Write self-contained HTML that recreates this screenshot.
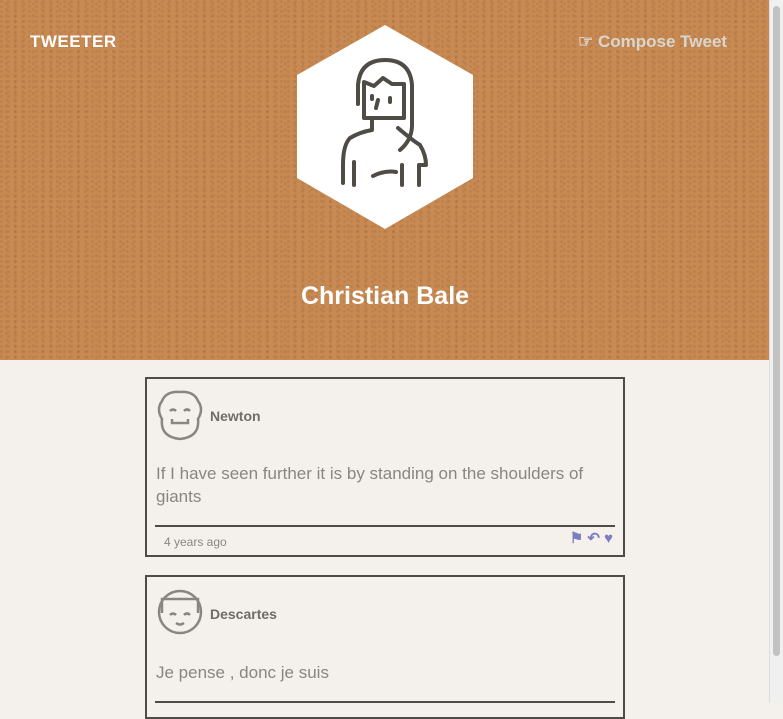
<!DOCTYPE html>
<html><head><style>
body{margin:0;width:783px;height:703px;overflow:hidden;background:#f4f1ec;font-family:"Liberation Sans",sans-serif;position:relative}
.hdr{position:absolute;left:0;top:0;width:770px;height:360px;background:#c88a52;
background-image:radial-gradient(circle at 20% 30%,rgba(90,60,30,.12) 0 1px,transparent 2px),radial-gradient(circle at 70% 60%,rgba(90,60,30,.12) 0 1px,transparent 2px);background-size:7px 5px,9px 6px}
.logo{position:absolute;left:30px;top:32px;color:#fff;font-weight:900;font-size:17px;letter-spacing:.5px}
.comp{position:absolute;left:578px;top:32px;color:#d9d6d2;font-weight:bold;font-size:17px}
.name{position:absolute;left:0;width:770px;text-align:center;top:282px;color:#fff;font-weight:bold;font-size:25px}
.sb{position:absolute;right:0;top:0;width:13px;height:703px;background:#f0f0f0;border-left:1px solid #ddd}
.sb div{position:absolute;left:3px;top:6px;width:7px;height:650px;background:#c2c2c2;border-radius:4px}
.card{position:absolute;left:145px;width:476px;border:2px solid #4f4b45;background:#f4f1ec}
.un{position:absolute;left:63px;top:29px;font-weight:bold;font-size:14px;color:#716c66}
.tx{position:absolute;left:9px;font-size:17px;color:#8a8580;line-height:23px;width:450px}
.ln{position:absolute;left:8px;right:8px;height:2px;background:#4f4b45}
.tm{position:absolute;left:17px;font-size:12px;color:#8a8580}
</style></head><body>
<div class="hdr"></div>
<div class="logo">TWEETER</div>
<div class="comp">☞ Compose Tweet</div>
<svg style="position:absolute;left:0;top:0" width="770" height="360">
<polygon points="385,25 473,75 473,178 385,229 297,178 297,75" fill="#fff"/>
<g fill="none" stroke="#4f4b45" stroke-width="4" stroke-linecap="round" stroke-linejoin="round">
<path d="M358,104 V85 Q360,60 385,60 Q410,60 412,85 V125 Q412,140 400,150"/>
<path d="M364,82 L374,86 L383,78 L392,84 L404,84 V118 H364 Z"/>
<path d="M372,118 V130 Q360,132 350,138 Q343,145 343,165 V183"/>
<path d="M398,128 Q412,140 420,145 Q426,155 426,165 H419 V185"/>
<path d="M354,162 V185"/><path d="M402,165 V185"/>
<path d="M373,176 Q385,170 396,172"/>
<path d="M378,100 L376,108"/><path d="M390,98 V102"/><path d="M372,96 V99"/>
</g></svg>
<div class="name">Christian Bale</div>
<div class="card" style="top:377px;height:176px">
<svg style="position:absolute;left:9px;top:10px" width="48" height="55"><g fill="none" stroke="#8a8580" stroke-width="2.5"><path d="M6,30 Q0,20 6,12 Q10,2 24,3 Q38,2 42,12 Q48,20 42,30 Q44,48 24,50 Q4,48 6,30Z"/><path d="M14,22 Q17,19 20,22 M28,22 Q31,19 34,22 M16,30 V34 H32 V30"/></g></svg>
<div class="un">Newton</div>
<div class="tx" style="top:83px">If I have seen further it is by standing on the shoulders of giants</div>
<div class="ln" style="top:146px"></div>
<div class="tm" style="top:156px">4 years ago</div>
<div style="position:absolute;right:10px;top:150px;color:#7b7fc0;font-size:15px;font-weight:bold">⚑ ↶ ♥</div>
</div>
<div class="card" style="top:575px;height:140px">
<svg style="position:absolute;left:9px;top:8px" width="48" height="55"><g fill="none" stroke="#8a8580" stroke-width="2.5"><circle cx="24" cy="27" r="21"/><path d="M6,28 V14 H42 V28 M14,30 Q17,27 20,30 M28,30 Q31,27 34,30 M20,38 Q24,41 28,38"/></g></svg>
<div class="un">Descartes</div>
<div class="tx" style="top:84px">Je pense , donc je suis</div>
<div class="ln" style="top:124px"></div>
</div>
<div class="sb"><div></div></div>
</body></html>
